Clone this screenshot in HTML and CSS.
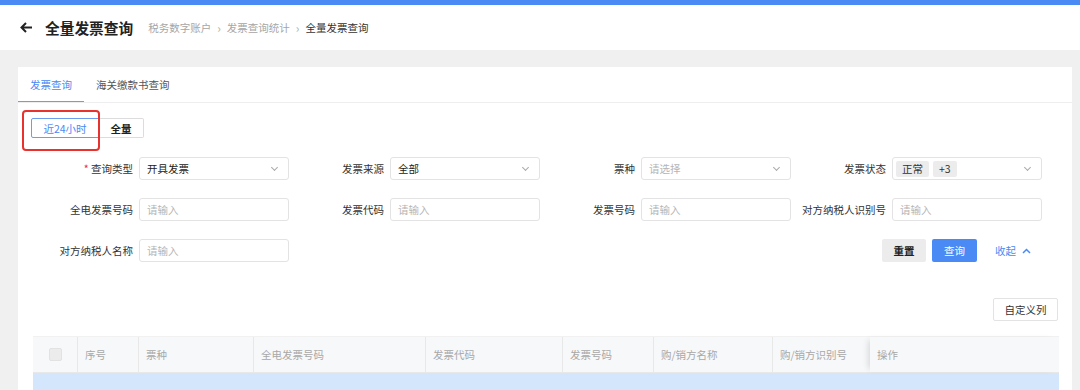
FILE: index.html
```html
<!DOCTYPE html>
<html lang="zh">
<head>
<meta charset="utf-8">
<title>全量发票查询</title>
<link rel="stylesheet" href="styles.css">
</head>
<body>
<div class="topbar"></div>
<header class="header">
  <svg class="back" width="13" height="11" viewBox="0 0 13 11"><path d="M12 5.5H2M6 1L1.5 5.5L6 10" fill="none" stroke="#222" stroke-width="2"/></svg>
  <h1 class="title">全量发票查询</h1>
  <nav class="crumbs">
    <span>税务数字账户</span><span class="sep">›</span><span>发票查询统计</span><span class="sep">›</span><span class="cur">全量发票查询</span>
  </nav>
</header>
<main class="main">
  <section class="card">
    <div class="tabs">
      <div class="tab active">发票查询</div>
      <div class="tab">海关缴款书查询</div>
    </div>
    <div class="seg-wrap">
      <div class="seg">
        <button class="seg-btn on">近24小时</button><button class="seg-btn all">全量</button>
      </div>
      <div class="mark"></div>
    </div>
    <form class="form">
      <div class="item"><label class="lbl"><span class="req">*</span> 查询类型</label><div class="inp sel">开具发票<i class="chev"></i></div></div>
      <div class="item"><label class="lbl">发票来源</label><div class="inp sel">全部<i class="chev"></i></div></div>
      <div class="item"><label class="lbl">票种</label><div class="inp sel ph">请选择<i class="chev"></i></div></div>
      <div class="item"><label class="lbl">发票状态</label><div class="inp sel tags"><span class="tag">正常</span><span class="tag">+3</span><i class="chev"></i></div></div>
      <div class="item"><label class="lbl">全电发票号码</label><div class="inp ph">请输入</div></div>
      <div class="item"><label class="lbl">发票代码</label><div class="inp ph">请输入</div></div>
      <div class="item"><label class="lbl">发票号码</label><div class="inp ph">请输入</div></div>
      <div class="item"><label class="lbl">对方纳税人识别号</label><div class="inp ph">请输入</div></div>
      <div class="item"><label class="lbl">对方纳税人名称</label><div class="inp ph">请输入</div></div>
      <div class="actions">
        <button type="button" class="btn reset">重置</button>
        <button type="button" class="btn query">查询</button>
        <span class="fold">收起<svg width="9" height="6" viewBox="0 0 9 6"><path d="M1 5L4.5 1.5L8 5" fill="none" stroke="#4a8af4" stroke-width="1.5"/></svg></span>
      </div>
    </form>
    <div class="tools"><button class="btn cols">自定义列</button></div>
    <div class="table">
      <div class="thead">
        <div class="th c0"><span class="chk"></span></div>
        <div class="th c1">序号</div>
        <div class="th c2">票种</div>
        <div class="th c3">全电发票号码</div>
        <div class="th c4">发票代码</div>
        <div class="th c5">发票号码</div>
        <div class="th c6">购/销方名称</div>
        <div class="th c7">购/销方识别号</div>
        <div class="th c8">操作</div>
      </div>
      <div class="row"></div>
    </div>
  </section>
</main>
</body>
</html>
```
FILE: styles.css
```css
* { box-sizing: border-box; }
html, body { margin: 0; padding: 0; }
body {
  background: #f0f0f0;
  font-family: "Microsoft YaHei", "Noto Sans CJK SC", "Liberation Sans", sans-serif;
  font-size: 10.5px;
  color: #333;
  height: 390px;
  overflow: hidden;
}
.topbar { height: 5px; background: #4a8af4; }
.header {
  height: 45px;
  background: #fff;
  display: flex;
  align-items: center;
  padding-left: 20px;
}
.back { display: block; margin-right: 12px; }
.title {
  margin: 0;
  font-size: 14.7px;
  font-weight: 700;
  color: #222;
  margin-right: 15px;
}
.crumbs { display: flex; align-items: center; color: #a6a6a6; }
.crumbs .sep { margin: 0 6px; color: #b0b0b0; font-size: 12px; }
.crumbs .cur { color: #333; }
.main { padding: 17px 8px 0 18px; }
.card { background: #fff; height: 340px; position: relative; }
.tabs {
  display: flex;
  height: 36px;
  border-bottom: 1px solid #eeeeee;
}
.tab {
  padding: 0 12px;
  line-height: 35px;
  color: #555;
}
.tab.active { color: #4a8af4; border-bottom: 1.5px solid #6b9ef2; }
.seg-wrap { position: relative; padding: 15px 0 0 13px; }
.seg { display: flex; }
.seg-btn {
  height: 20px;
  font: inherit;
  background: #fff;
  border: 1px solid #dcdcdc;
  padding: 0;
  margin: 0;
  color: #333;
}
.seg-btn.on { width: 68px; border-color: #6b9ef2; color: #4a8af4; border-radius: 2px 0 0 2px; }
.seg-btn.all { width: 45px; border-left: 0; border-radius: 0 2px 2px 0; color: #222; font-weight: 600; }
.mark {
  position: absolute;
  left: 4px;
  top: 7px;
  width: 78px;
  height: 41px;
  border: 2px solid #e8322e;
  border-radius: 4px;
}
.form {
  display: grid;
  grid-template-columns: repeat(4, 251px);
  row-gap: 18px;
  padding: 19px 0 0 20px;
}
.item { display: flex; align-items: center; height: 23px; }
.lbl { flex: 1; text-align: right; margin-right: 6px; color: #333; white-space: nowrap; }
.req { color: #e8322e; }
.inp {
  width: 150px;
  height: 23px;
  border: 1px solid #e3e3e3;
  border-radius: 3px;
  padding: 0 7px;
  display: flex;
  align-items: center;
  color: #222;
  position: relative;
}
.inp.ph { color: #b5b5b5; }
.chev {
  position: absolute;
  right: 11px;
  top: 7px;
  width: 5px;
  height: 5px;
  border-right: 1px solid #aaa;
  border-bottom: 1px solid #aaa;
  transform: rotate(45deg);
}
.tags { padding-left: 3px; gap: 4px; }
.tag {
  background: #ececec;
  border-radius: 2px;
  height: 16px;
  line-height: 16px;
  padding: 0 6px;
  color: #333;
  font-size: 10.5px;
}
.actions {
  grid-column: 2 / 5;
  display: flex;
  justify-content: flex-end;
  align-items: center;
  padding-right: 11px;
}
.btn {
  font: inherit;
  height: 23px;
  border-radius: 2px;
  border: 0;
  padding: 0;
  cursor: pointer;
}
.reset { width: 44px; background: #ececec; color: #222; font-weight: 600; margin-right: 6px; }
.query { width: 45px; background: #4a8af4; color: #fff; margin-right: 18px; }
.fold { color: #4a8af4; display: flex; align-items: center; gap: 6px; }
.fold svg { display: block; }
.tools { display: flex; justify-content: flex-end; padding: 36px 14px 0 0; }
.cols { width: 65px; background: #fff; border: 1px solid #e3e3e3; color: #333; }
.table { margin: 15px 13px 0 15px; }
.thead {
  display: flex;
  height: 37px;
  background: #f7f8fa;
  border-top: 1px solid #f1f1f1;
  border-bottom: 1px solid #e8e8e8;
}
.th {
  display: flex;
  align-items: center;
  padding-left: 7px;
  color: #a8a8a8;
  border-right: 1px solid #e8e8e8;
  white-space: nowrap;
}
.c0 { width: 45px; justify-content: center; padding-left: 0; }
.c1 { width: 61px; }
.c2 { width: 115px; }
.c3 { width: 172px; }
.c4 { width: 137px; }
.c5 { width: 91px; }
.c6 { width: 119px; }
.c7 { width: 97px; border-right: 0; }
.c8 { flex: 1; border-right: 0; box-shadow: -5px 0 6px -3px rgba(0,0,0,0.12); }
.chk {
  width: 13px;
  height: 13px;
  background: #ececec;
  border: 1px solid #e2e2e2;
  border-radius: 2px;
}
.row { height: 20px; background: #d3e6fb; }
```
